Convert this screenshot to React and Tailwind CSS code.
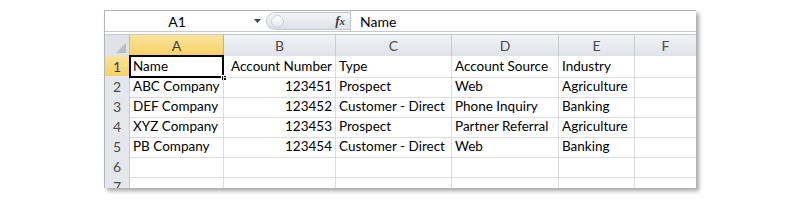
import React from 'react';

const cols = [
  { key: 'A', w: 94 },
  { key: 'B', w: 112 },
  { key: 'C', w: 116 },
  { key: 'D', w: 107 },
  { key: 'E', w: 76 },
  { key: 'F', w: 62 },
];

const rows = [
  ['Name', 'Account Number', 'Type', 'Account Source', 'Industry', ''],
  ['ABC Company', '123451', 'Prospect', 'Web', 'Agriculture', ''],
  ['DEF Company', '123452', 'Customer - Direct', 'Phone Inquiry', 'Banking', ''],
  ['XYZ Company', '123453', 'Prospect', 'Partner Referral', 'Agriculture', ''],
  ['PB Company', '123454', 'Customer - Direct', 'Web', 'Banking', ''],
  ['', '', '', '', '', ''],
  ['', '', '', '', '', ''],
];

const FormulaBar = () => (
  <div className="flex h-[21px] items-stretch border-b border-[#c5c9cf] bg-white">
    <div className="flex w-[144px] items-center justify-center text-[14px] text-black">A1</div>
    <div className="flex w-[17px] items-center justify-center">
      <svg width="7" height="4" viewBox="0 0 7 4">
        <path d="M0 0 L7 0 L3.5 4 Z" fill="#444" />
      </svg>
    </div>
    <div className="my-[1px] flex w-[84px] items-center rounded-l-full border border-r-0 border-[#c3c8d0] bg-gradient-to-b from-[#f4f6f9] to-[#dde2e9] pl-[4px]">
      <div className="h-[13px] w-[13px] rounded-full border border-[#c9ced6] bg-gradient-to-b from-[#ffffff] to-[#e3e7ed]" />
      <div className="flex-1" />
      <span className="pr-[5px] font-['Liberation_Serif',serif] text-[13px] font-bold italic text-[#3b3b3b]">
        f<span className="text-[11px]">x</span>
      </span>
    </div>
    <div className="flex flex-1 items-center border-l border-[#c3c8d0] pl-[9px] text-[14px] text-black">Name</div>
  </div>
);

const HeaderRow = () => (
  <div className="grid h-[21px] grid-cols-[25px_94px_112px_116px_107px_76px_62px] border-b border-[#aab2bf]">
    <div className="relative border-r border-[#b9c0ca] bg-[#dfe3e8]">
      <svg className="absolute bottom-[3px] right-[3px]" width="10" height="10" viewBox="0 0 10 10">
        <path d="M10 0 L10 10 L0 10 Z" fill="#b8bec6" />
      </svg>
    </div>
    {cols.map((c) => (
      <div
        key={c.key}
        className={
          c.key === 'A'
            ? 'flex items-center justify-center border-r border-[#d9b44a] bg-gradient-to-b from-[#fbe39a] to-[#f7d165] text-[14px] text-[#404040]'
            : 'flex items-center justify-center border-r border-[#c5cbd3] bg-gradient-to-b from-[#f1f3f6] to-[#dfe3e9] text-[14px] text-[#4c4c4c]'
        }
      >
        {c.key}
      </div>
    ))}
  </div>
);

const DataRow = ({ cells, idx }) => (
  <div className="grid h-[20px] grid-cols-[25px_94px_112px_116px_107px_76px_62px]">
    <div
      className={
        idx === 0
          ? 'flex items-center justify-center border-r border-b border-[#d9b44a] bg-gradient-to-b from-[#fbe39a] to-[#f7d165] text-[14px] text-[#404040]'
          : 'flex items-center justify-center border-r border-b border-[#c5cbd3] bg-[#e4e8ed] text-[14px] text-[#4c4c4c]'
      }
    >
      {idx + 1}
    </div>
    {cells.map((v, i) => (
      <div
        key={i}
        className={
          'relative flex items-center overflow-visible whitespace-nowrap border-r border-b border-[#dadcdd] text-[13.5px] text-black ' +
          (i === 1 ? 'justify-end pr-[3px]' : 'pl-[3px]')
        }
      >
        {v}
        {idx === 0 && i === 0 && (
          <>
            <span className="pointer-events-none absolute inset-x-[-1px] top-[-1px] bottom-[-1px] border-2 border-black" />
            <span className="absolute bottom-[-4px] right-[-4px] h-[6px] w-[6px] border border-white bg-black" />
          </>
        )}
      </div>
    ))}
  </div>
);

export default function App() {
  return (
    <div className="h-[206px] w-[800px] bg-white pl-[104px] pt-[10px] font-['Lato',sans-serif]">
      <div className="h-[178px] w-[592px] overflow-hidden border-t border-l border-[#b5b5b5] bg-white shadow-[3px_3px_4px_rgba(0,0,0,0.35)]">
        <FormulaBar />
        <div className="h-[3px] border-b border-[#c5c9cf] bg-white" />
        <HeaderRow />
        {rows.map((r, i) => (
          <DataRow key={i} cells={r} idx={i} />
        ))}
      </div>
    </div>
  );
}
